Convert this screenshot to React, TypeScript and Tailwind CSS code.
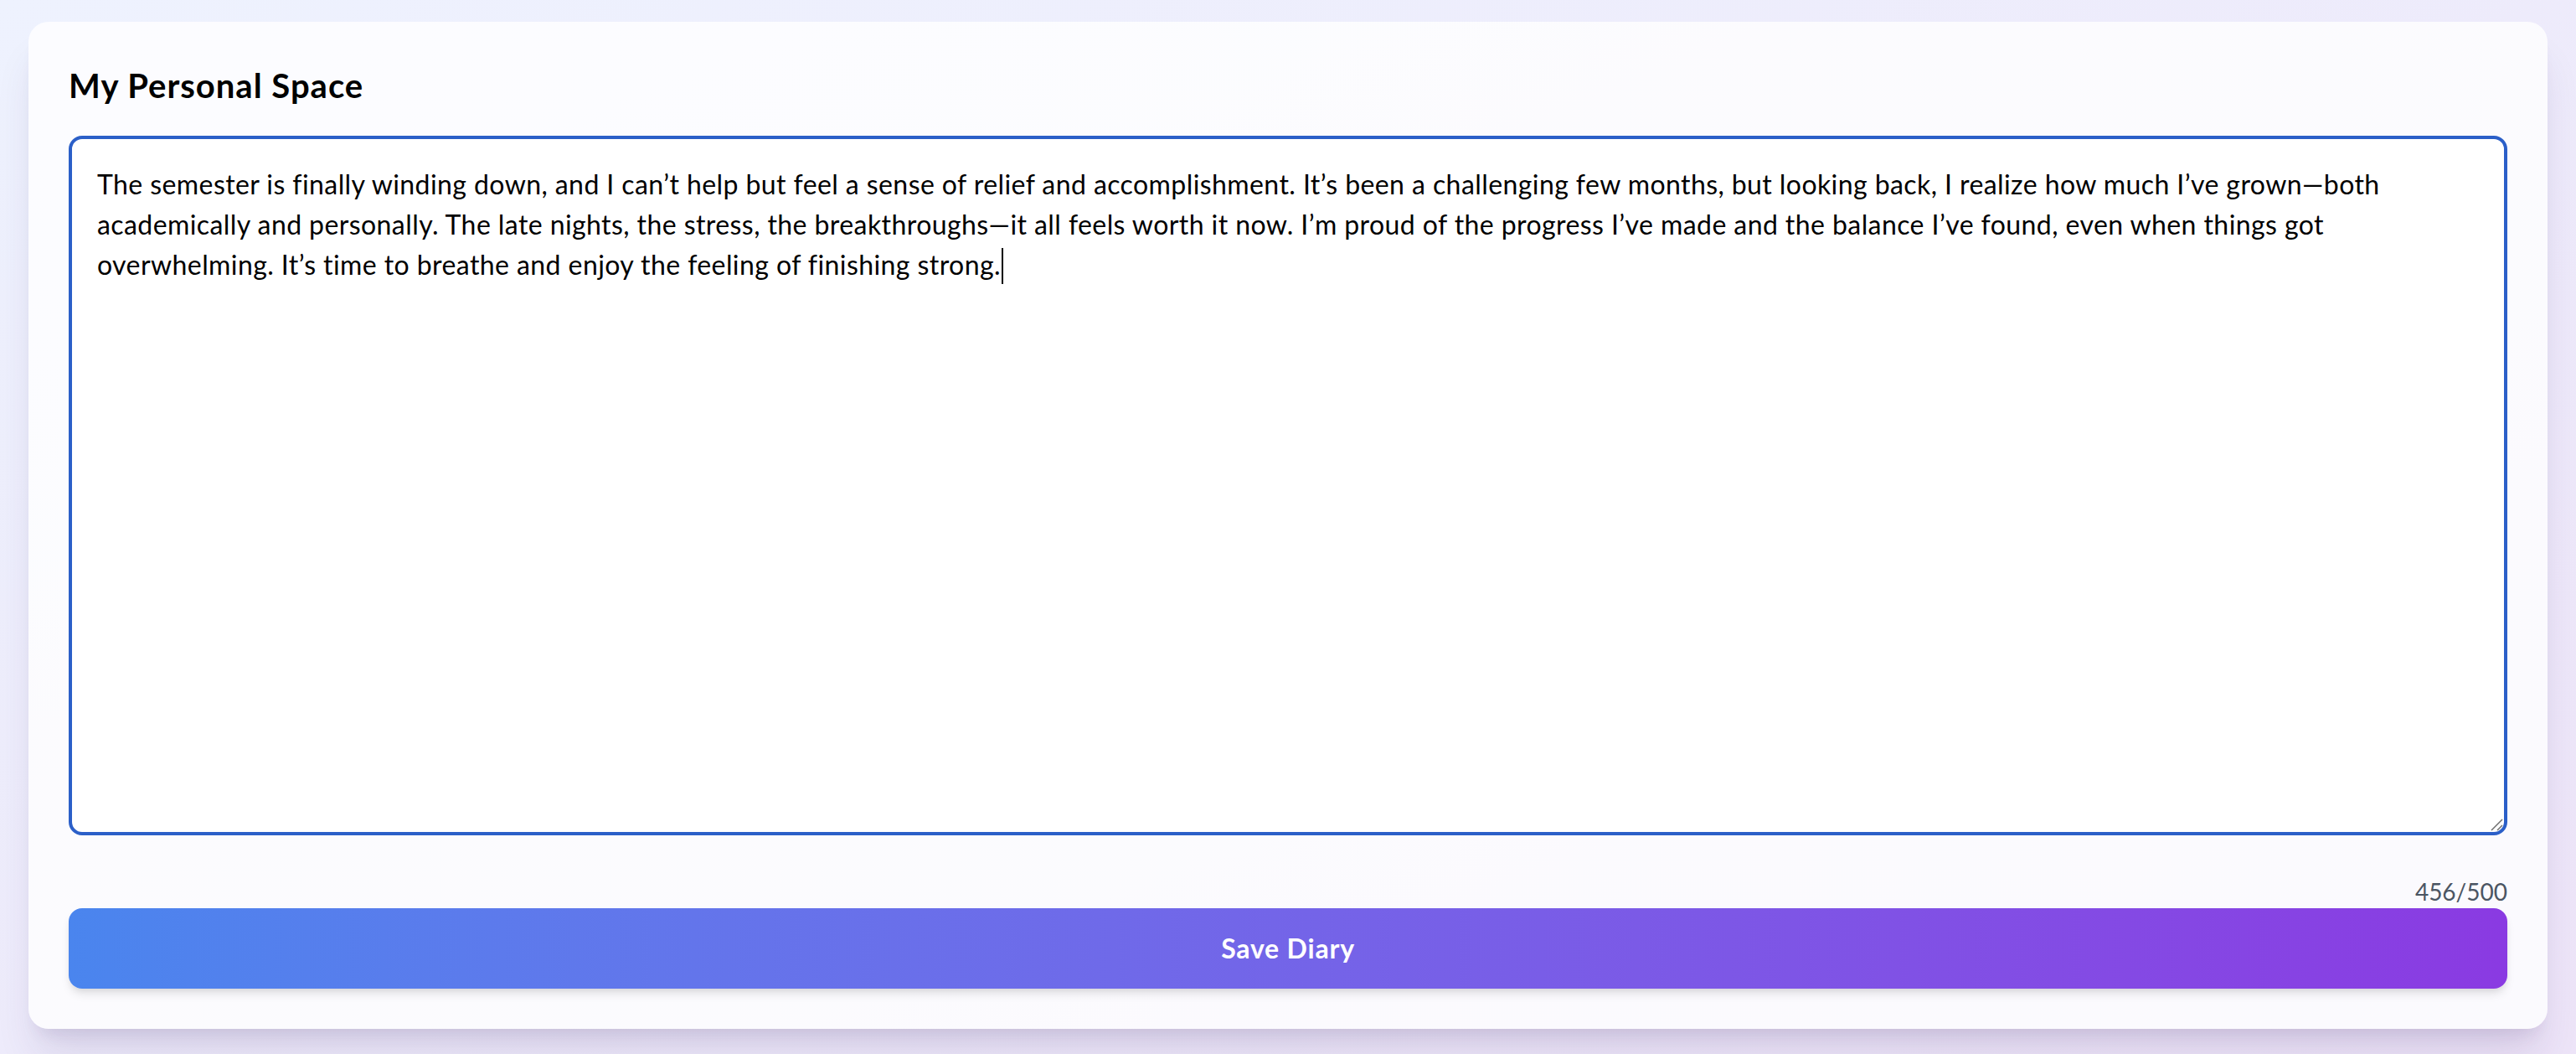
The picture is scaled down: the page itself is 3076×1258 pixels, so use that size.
import React from "react";

const lines = [
  "The semester is finally winding down, and I can\u2019t help but feel a sense of relief and accomplishment. It\u2019s been a challenging few months, but looking back, I realize how much I\u2019ve grown\u2014both",
  "academically and personally. The late nights, the stress, the breakthroughs\u2014it all feels worth it now. I\u2019m proud of the progress I\u2019ve made and the balance I\u2019ve found, even when things got",
  "overwhelming. It\u2019s time to breathe and enjoy the feeling of finishing strong.",
];

export default function App() {
  return (
    <div className="min-h-screen bg-linear-to-br from-[#eef2fe] to-[#ede4f8] px-[34px] pt-[26px] pb-[30px] font-['Lato',sans-serif]">
      <div className="rounded-[24px] bg-white/80 p-[48px] shadow-[0_40px_50px_-10px_rgba(60,30,100,0.12),0_16px_20px_-12px_rgba(60,30,100,0.12)]">
        <h1 className="mb-[32px] text-[40px] font-bold leading-[56px] tracking-[1px] text-black">My Personal Space</h1>
        <div className="relative h-[835px] rounded-[16px] border-[4px] border-[#2b5fc8] bg-white p-[30px] text-[32px] leading-[48px] tracking-[0.42px] text-black">
          {lines.map((l, i) => (
            <div key={i} className="whitespace-nowrap">
              {l}
              {i === lines.length - 1 && (
                <span className="ml-[1px] inline-block h-[43px] w-[2px] bg-black align-[-11px]" />
              )}
            </div>
          ))}
          <svg
            className="absolute bottom-[1px] right-[1px]"
            width="18"
            height="18"
            viewBox="0 0 18 18"
          >
            <line x1="4" y1="17" x2="17" y2="4" stroke="#6b6b6b" strokeWidth="1.5" />
            <line x1="11" y1="17" x2="17" y2="11" stroke="#6b6b6b" strokeWidth="1.5" />
          </svg>
        </div>
        <div className="mt-[47px] text-right text-[28px] leading-[40px] text-[#4b5563]">456/500</div>
        <button className="flex h-[96px] w-full items-center justify-center rounded-[16px] bg-linear-to-r from-[#4a85ee] to-[#8a3ae2] text-[32px] font-bold tracking-[0.8px] text-white shadow-[0_8px_12px_-2px_rgba(0,0,0,0.1),0_4px_8px_-4px_rgba(0,0,0,0.1)]">
          Save Diary
        </button>
      </div>
    </div>
  );
}
